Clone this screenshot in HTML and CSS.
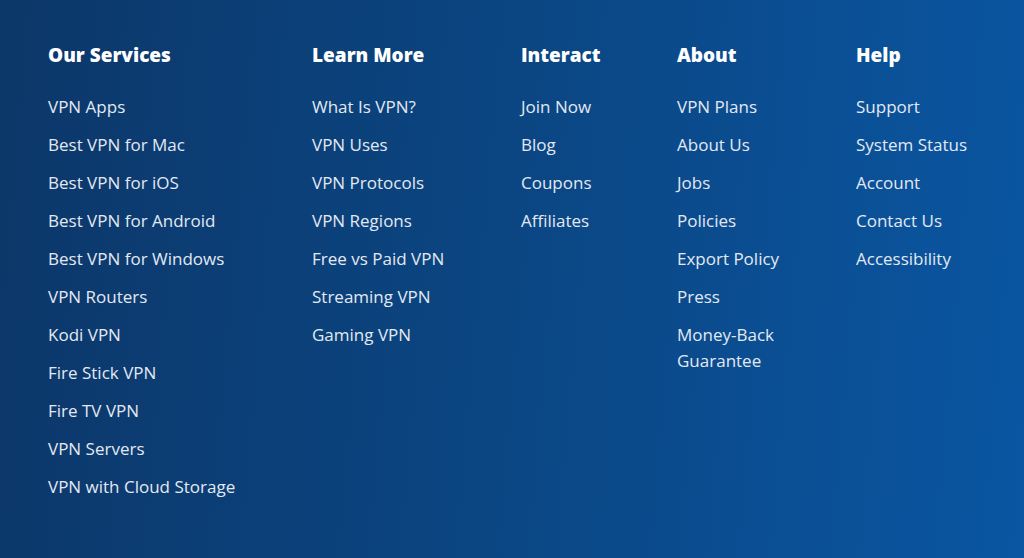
FILE: index.html
```html
<!DOCTYPE html>
<html lang="en">
<head>
  <meta charset="UTF-8" />
  <meta name="viewport" content="width=device-width, initial-scale=1.0" />
  <title>Footer</title>
  <link rel="stylesheet" href="styles.css">
</head>
<body>
  <footer class="site-footer">
    <div class="footer-cols">
      <!-- Services -->
      <div class="footer-col col-services">
        <h3>Our Services</h3>
        <ul>
          <li><a href="#">VPN Apps</a></li>
          <li><a href="#">Best VPN for Mac</a></li>
          <li><a href="#">Best VPN for iOS</a></li>
          <li><a href="#">Best VPN for Android</a></li>
          <li><a href="#">Best VPN for Windows</a></li>
          <li><a href="#">VPN Routers</a></li>
          <li><a href="#">Kodi VPN</a></li>
          <li><a href="#">Fire Stick VPN</a></li>
          <li><a href="#">Fire TV VPN</a></li>
          <li><a href="#">VPN Servers</a></li>
          <li><a href="#">VPN with Cloud Storage</a></li>
        </ul>
      </div>

      <!-- Learn More -->
      <div class="footer-col col-learn">
        <h3>Learn More</h3>
        <ul>
          <li><a href="#">What Is VPN?</a></li>
          <li><a href="#">VPN Uses</a></li>
          <li><a href="#">VPN Protocols</a></li>
          <li><a href="#">VPN Regions</a></li>
          <li><a href="#">Free vs Paid VPN</a></li>
          <li><a href="#">Streaming VPN</a></li>
          <li><a href="#">Gaming VPN</a></li>
        </ul>
      </div>

      <!-- Interact -->
      <div class="footer-col col-interact">
        <h3>Interact</h3>
        <ul>
          <li><a href="#">Join Now</a></li>
          <li><a href="#">Blog</a></li>
          <li><a href="#">Coupons</a></li>
          <li><a href="#">Affiliates</a></li>
        </ul>
      </div>

      <!-- About -->
      <div class="footer-col col-about">
        <h3>About</h3>
        <ul>
          <li><a href="#">VPN Plans</a></li>
          <li><a href="#">About Us</a></li>
          <li><a href="#">Jobs</a></li>
          <li><a href="#">Policies</a></li>
          <li><a href="#">Export Policy</a></li>
          <li><a href="#">Press</a></li>
          <li><a href="#">Money-Back Guarantee</a></li>
        </ul>
      </div>

      <!-- Help -->
      <div class="footer-col col-help">
        <h3>Help</h3>
        <ul>
          <li><a href="#">Support</a></li>
          <li><a href="#">System Status</a></li>
          <li><a href="#">Account</a></li>
          <li><a href="#">Contact Us</a></li>
          <li><a href="#">Accessibility</a></li>
        </ul>
      </div>
    </div>
  </footer>
</body>
</html>
```

FILE: styles.css
```css
html, body {
  height: 100%;
}
body {
  margin: 0;
  padding: 0;
  font-family: 'Open Sans', 'Liberation Sans', sans-serif;
  overflow: hidden;
}
.site-footer {
  min-height: 100%;
  box-sizing: border-box;
  padding: 41px 0 0 48px;
  background: linear-gradient(95deg, #0c3769 0%, #0b4683 50%, #0a56a2 100%);
}
.footer-cols {
  display: grid;
  grid-template-columns: 264px 209px 156px 179px 1fr;
}
.footer-col h3 {
  margin: 0 0 25px;
  font-size: 19px;
  line-height: 28px;
  font-weight: 800;
  color: #fff;
}
.footer-col ul {
  list-style: none;
  margin: 0;
  padding: 0;
}
.footer-col li {
  margin-bottom: 12px;
  font-size: 17px;
  line-height: 26px;
}
.footer-col a {
  color: #e3e9f2;
  text-decoration: none;
}
.col-about ul {
  max-width: 150px;
}
```
